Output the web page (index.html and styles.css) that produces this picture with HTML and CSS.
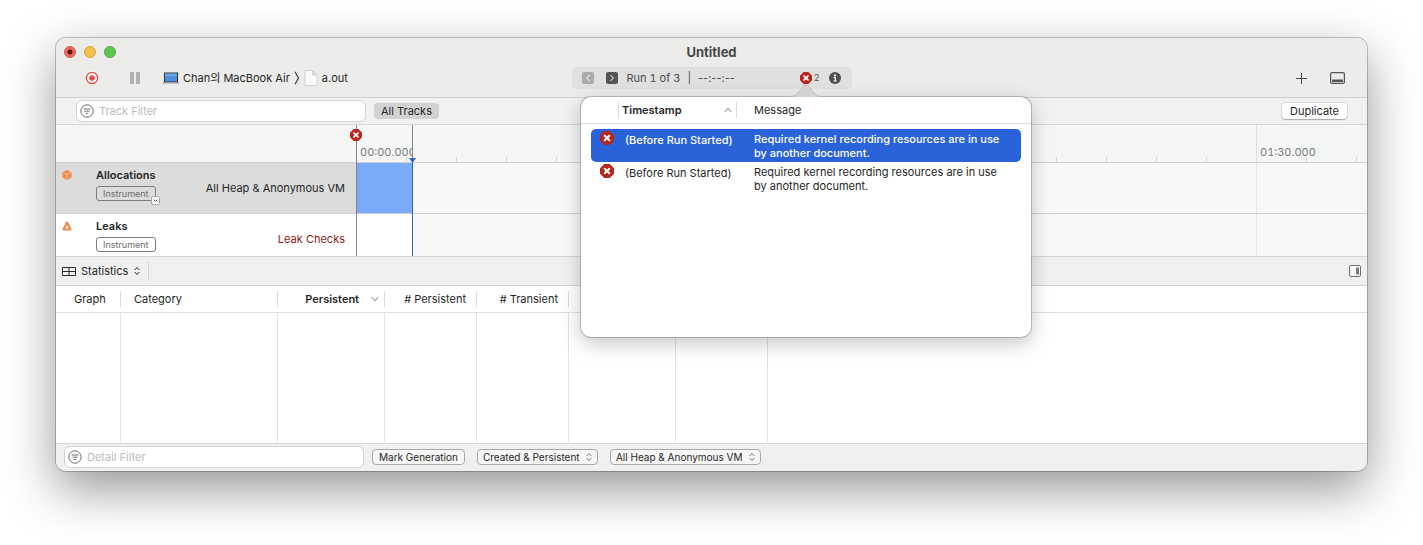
FILE: index.html
```html
<!DOCTYPE html>
<html lang="en">
<head>
    <meta charset="UTF-8">
    <meta name="viewport" content="width=device-width, initial-scale=1.0">
    <title>Untitled</title>
    <link rel="stylesheet" href="styles.css">
</head>
<body>

    <!-- shared icons -->
    <svg class="defs" width="0" height="0" aria-hidden="true">
        <symbol id="error" viewBox="0 0 14 14">
            <path d="M4.800 .5h4.400L13.500 4.800v4.400L9.200 13.500H4.800L.5 9.200V4.800z" fill="#b9261b" stroke="#b9261b" stroke-width="1.400" stroke-linejoin="round"/>
            <path d="M4.700 4.700l4.600 4.600M9.300 4.700L4.700 9.300" stroke="#fff" stroke-width="2" stroke-linecap="round"/>
        </symbol>
        <symbol id="filter" viewBox="0 0 14 14">
            <circle cx="7" cy="7" r="6.200" fill="none" stroke="#6e6e6e"/>
            <path d="M3.500 5h7M4.500 7.200h5M5.800 9.400h2.400" stroke="#6e6e6e" fill="none"/>
        </symbol>
        <symbol id="updown" viewBox="0 0 6 10">
            <path d="M1 3.700L3 1.500l2 2.200M1 6.300l2 2.200 2-2.200" fill="none" stroke="currentColor" stroke-linecap="round" stroke-linejoin="round"/>
        </symbol>
    </svg>

    <div class="window">
        <header class="titlebar">
            <div class="title-row">
                <div class="lights">
                    <button class="light red" aria-label="Close"></button>
                    <button class="light yellow" aria-label="Minimize"></button>
                    <button class="light green" aria-label="Zoom"></button>
                </div>
                <h1>Untitled</h1>
            </div>
            <div class="toolbar">
                <div class="tools">
                    <button class="record" aria-label="Record">
                        <svg width="14" height="14" viewBox="0 0 14 14"><circle cx="7" cy="7" r="7" fill="#fff"/><circle cx="7" cy="7" r="5.700" fill="none" stroke="#ee4b3e" stroke-width="1.300"/><circle cx="7" cy="7" r="2.800" fill="#ee4b3e"/></svg>
                    </button>
                    <button class="pause" aria-label="Pause">
                        <svg width="10" height="12" viewBox="0 0 10 12"><path d="M0 0h4v12H0zM6 0h4v12H6z" fill="#b1b1b0"/></svg>
                    </button>
                    <button class="target">
                        <svg width="16" height="12" viewBox="0 0 16 12"><path d="M1 .5h14V10H1z" fill="#333"/><path d="M2 1.500h12V9.500H2z" fill="#4a8fdb"/><path d="M2 1.500h12v3H2z" fill="#69a5e4"/><path d="M0 10h16v1.500H0z" fill="#9a9a9a"/></svg>
                        <span>Chan의 MacBook Air</span>
                        <svg width="6" height="14" viewBox="0 0 6 14"><path d="M1 .7L4.500 7 1 13.300" fill="none" stroke="#3a3a3a" stroke-width="1.200"/></svg>
                        <svg class="doc" width="14" height="16" viewBox="0 0 14 16"><path d="M1 .5h7.500L13 5v10.500H1z" fill="#fbfbfb" stroke="#d2d2d2"/><path d="M8.500 .5V5H13z" fill="#e4e4e4" stroke="#cfcfcf"/></svg>
                        <span>a.out</span>
                    </button>
                </div>
                <div class="status">
                    <button class="step prev" aria-label="Previous run" disabled>
                        <svg width="12" height="12" viewBox="0 0 12 12"><path d="M7.300 3.300L4.600 6l2.700 2.700" fill="none" stroke="#fff" stroke-linecap="round"/></svg>
                    </button>
                    <button class="step" aria-label="Next run">
                        <svg width="12" height="12" viewBox="0 0 12 12"><path d="M4.700 3.300L7.400 6 4.700 8.700" fill="none" stroke="#fff" stroke-linecap="round"/></svg>
                    </button>
                    <div class="run"><span class="number">Run 1 of 3</span><span>|</span><span>--:--:--</span></div>
                    <div class="errors">
                        <button class="plain" aria-label="Show errors"><svg width="12" height="12"><use href="#error"/></svg></button>
                        <div class="popover">
                            <svg class="arrow" width="32" height="13" viewBox="0 0 32 13"><path d="M0 13c5 0 6-1.500 8.500-4.200L14.500 1.500q1.500-1.500 3 0l6 7.300C26 11.500 27 13 32 13z" fill="#d3d3d2"/><path d="M0 12.500c5 0 6-1.500 8.500-4.200L14.500 1.300q1.500-1.500 3 0l6 7C26 11 27 12.500 32 12.500" fill="none" stroke="#bcbcbb"/></svg>
                            <table class="messages">
                                <colgroup><col class="c-icon"><col class="c-time"><col></colgroup>
                                <thead>
                                    <tr>
                                        <th></th>
                                        <th class="sorted"><span>Timestamp<svg width="8" height="6" viewBox="0 0 8 6"><path d="M.8 4.800L4 1.200l3.200 3.600" fill="none" stroke="#777"/></svg></span></th>
                                        <th>Message</th>
                                    </tr>
                                </thead>
                                <tbody>
                                    <tr class="selected">
                                        <td><svg width="14" height="14"><use href="#error"/></svg></td>
                                        <td>(Before Run Started)</td>
                                        <td>Required kernel recording resources are in use by another document.</td>
                                    </tr>
                                    <tr>
                                        <td><svg width="14" height="14"><use href="#error"/></svg></td>
                                        <td>(Before Run Started)</td>
                                        <td>Required kernel recording resources are in use by another document.</td>
                                    </tr>
                                </tbody>
                            </table>
                        </div>
                    </div>
                    <span class="count">2</span>
                    <button class="plain info" aria-label="Info">
                        <svg width="12" height="12" viewBox="0 0 12 12"><circle cx="6" cy="6" r="6" fill="#4f4f4f"/><circle cx="6" cy="3.200" r="1" fill="#fff"/><path d="M4.600 5.300h1.700v3.500M4.500 9h3.200" fill="none" stroke="#fff" stroke-width="1.200"/></svg>
                    </button>
                </div>
                <div class="tools right">
                    <button class="plain" aria-label="Add"><svg width="11" height="11" viewBox="0 0 11 11"><path d="M5.500 0v11M0 5.500h11" stroke="#4a4a4a"/></svg></button>
                    <button class="plain" aria-label="Toggle detail area"><svg width="15" height="12" viewBox="0 0 15 12"><rect x=".6" y=".6" width="13.800" height="10.800" rx="1.500" fill="none" stroke="#555" stroke-width="1.200"/><path d="M2 7.500h11v2.500H2z" fill="#555"/></svg></button>
                </div>
            </div>
        </header>

        <div class="filterbar">
            <label class="search">
                <svg width="14" height="14"><use href="#filter"/></svg>
                <input type="text" placeholder="Track Filter" aria-label="Track Filter">
            </label>
            <button class="scope">All Tracks</button>
            <button class="duplicate">Duplicate</button>
        </div>

        <div class="tracks">
            <div class="ruler">
                <div class="corner"></div>
                <div class="scale">
                    <div class="mark first"><span>00:00.000</span></div>
                    <div class="mark"></div>
                    <div class="mark"></div>
                    <div class="mark last"><span>01:30.000</span></div>
                </div>
            </div>
            <div class="track active">
                <div class="info-cell">
                    <svg class="kind" width="10" height="10" viewBox="0 0 10 10"><path d="M5 0l4.600 2.200v5.300L5 10 .4 7.500V2.200z" fill="#ef8a4c"/><path d="M.6 2.400L5 4.600l4.400-2.200M5 4.600V10" fill="none" stroke="#f9c9a6" stroke-width=".8"/></svg>
                    <div class="name">
                        <h2>Allocations</h2>
                        <button class="tag">Instrument<svg class="more" width="9" height="9" viewBox="0 0 9 9"><rect x=".5" y=".5" width="8" height="8" rx="1.500" fill="#fff" stroke="#aaa"/><path d="M2.700 3.700l1.800 1.800 1.800-1.800" fill="none" stroke="#444"/></svg></button>
                    </div>
                    <span class="lane-label">All Heap &amp; Anonymous VM</span>
                </div>
                <div class="lane"><div class="region"></div></div>
            </div>
            <div class="track">
                <div class="info-cell">
                    <svg class="kind" width="10" height="10" viewBox="0 0 10 10"><path d="M5 1.500L8.500 8.500h-7z" fill="none" stroke="#ef8a4c" stroke-width="2.200" stroke-linejoin="round"/></svg>
                    <div class="name">
                        <h2>Leaks</h2>
                        <button class="tag">Instrument</button>
                    </div>
                    <span class="lane-label leak">Leak Checks</span>
                </div>
                <div class="lane"><div class="region"></div></div>
            </div>
            <div class="start-line"><svg width="12" height="12"><use href="#error"/></svg></div>
            <div class="playhead"><svg width="7" height="5" viewBox="0 0 7 5"><path d="M0 0h7L3.500 5z" fill="#2a62d9"/></svg></div>
        </div>

        <div class="detailbar">
            <label class="picker">
                <svg width="14" height="9" viewBox="0 0 14 9"><path d="M.5 .5h13v8H.5zM.5 4.500h13M7 .5v8" fill="none" stroke="#2b2b2b"/></svg>
                <select aria-label="Detail view"><option>Statistics</option></select>
                <svg width="6" height="10"><use href="#updown"/></svg>
            </label>
            <button class="plain side" aria-label="Toggle inspector"><svg width="12" height="12" viewBox="0 0 12 12"><rect x=".5" y=".5" width="11" height="11" rx="1.500" fill="#fafafa" stroke="#6f6f6f"/><path d="M7 2.500h3v7H7z" fill="#777"/></svg></button>
        </div>

        <table class="stats">
            <colgroup>
                <col class="w-graph"><col class="w-cat"><col class="w-wide"><col class="w-num"><col class="w-num"><col class="w-wide"><col class="w-num"><col>
            </colgroup>
            <thead>
                <tr>
                    <th>Graph</th>
                    <th class="cat">Category</th>
                    <th class="sorted"><span>Persistent<svg width="8" height="6" viewBox="0 0 8 6"><path d="M.8 1.200L4 4.800l3.200-3.600" fill="none" stroke="#777"/></svg></span></th>
                    <th class="num"># Persistent</th>
                    <th class="num"># Transient</th>
                    <th></th>
                    <th></th>
                    <th></th>
                </tr>
            </thead>
            <tbody>
                <tr><td></td><td></td><td></td><td></td><td></td><td></td><td></td><td></td></tr>
            </tbody>
        </table>

        <footer class="bottombar">
            <label class="search">
                <svg width="14" height="14"><use href="#filter"/></svg>
                <input type="text" placeholder="Detail Filter" aria-label="Detail Filter">
            </label>
            <button class="pill">Mark Generation</button>
            <label class="pill">
                <select aria-label="Lifespan"><option>Created &amp; Persistent</option></select>
                <svg width="6" height="10"><use href="#updown"/></svg>
            </label>
            <label class="pill">
                <select aria-label="Allocation type"><option>All Heap &amp; Anonymous VM</option></select>
                <svg width="6" height="10"><use href="#updown"/></svg>
            </label>
        </footer>
    </div>

</body>
</html>
```
FILE: styles.css
```css
* {
    box-sizing: border-box;
}
body {
    margin: 0;
    padding: 38px 56px 74px;
    background: #fff;
    font-family: Inter, "Noto Sans CJK KR", sans-serif;
    font-size: 11px;
    line-height: 14px;
    color: #262626;
}
button, input, select {
    font: inherit;
    color: inherit;
    margin: 0;
    padding: 0;
    border: none;
    background: none;
}
select {
    appearance: none;
}
svg {
    display: block;
    flex: none;
    overflow: visible;
}
h1, h2 {
    margin: 0;
}
.defs {
    position: absolute;
}
.window {
    border-radius: 10px;
    background: #fff;
    box-shadow: 0 0 0 1px rgba(0, 0, 0, 0.22), 0 18px 50px rgba(0, 0, 0, 0.42);
}

/* title bar */
.titlebar {
    background: #ececea;
    border-bottom: 1px solid #cfcfce;
    border-radius: 10px 10px 0 0;
    padding-bottom: 7px;
}
.title-row, .toolbar {
    display: grid;
    grid-template-columns: 1fr 280px 1fr;
    align-items: center;
}
.title-row {
    height: 28px;
}
.title-row h1 {
    font-size: 13px;
    line-height: 16px;
    text-align: center;
    color: #474747;
}
.lights {
    display: flex;
    gap: 8px;
    padding-left: 8px;
}
.light {
    width: 12px;
    height: 12px;
    border-radius: 50%;
    border: 1px solid;
}
.red {
    background: radial-gradient(circle, #6b0f0a 2px, #ec6a5e 3px);
    border-color: #d35549;
}
.yellow {
    background: #f4bf4f;
    border-color: #dba63b;
}
.green {
    background: #61c554;
    border-color: #50aa43;
}
.toolbar {
    height: 24px;
}
.tools {
    display: flex;
    align-items: center;
    padding-left: 29px;
}
.tools.right {
    justify-content: flex-end;
    gap: 23px;
    padding: 0 22px 0 0;
}
.pause {
    margin-left: 31px;
}
.target {
    display: flex;
    align-items: center;
    gap: 4px;
    margin-left: 23px;
    white-space: nowrap;
}
.status {
    display: flex;
    align-items: center;
    height: 22px;
    padding: 0 11px 0 10px;
    border-radius: 5px;
    background: #e0e0de;
    color: #4d4d4d;
}
.step {
    margin-right: 12px;
    border-radius: 2px;
    background: #555;
}
.step + .step {
    margin-right: 9px;
}
.prev {
    background: #ababaa;
}
.run {
    display: flex;
    gap: 7px;
}
.number, .mark {
    font-variant-numeric: tabular-nums;
}
.errors {
    position: relative;
    margin-left: auto;
}
.plain {
    display: block;
}
.count {
    margin-left: 2px;
    font-size: 9px;
}
.info {
    margin-left: 9px;
}

/* error popover */
.popover {
    position: absolute;
    z-index: 2;
    top: 25px;
    left: 50%;
    width: 450px;
    min-height: 240px;
    margin-left: -225px;
    border-radius: 10px;
    background: #fff;
    color: #262626;
    box-shadow: 0 0 0 1px rgba(0, 0, 0, 0.2), 0 6px 20px rgba(0, 0, 0, 0.24);
}
.arrow {
    position: absolute;
    left: 209px;
    top: -13px;
}
.messages, .stats {
    width: 100%;
    table-layout: fixed;
    border-spacing: 0;
}
th, td {
    padding: 0;
    text-align: left;
    font-weight: normal;
}
th {
    height: 27px;
    border-bottom: 1px solid #e0e0e0;
    background: linear-gradient(#dcdcdc, #dcdcdc) right center / 1px 16px no-repeat;
}
th:last-child {
    background: none;
}
.sorted {
    font-weight: 600;
}
.sorted span {
    display: flex;
    align-items: center;
}
.c-icon {
    width: 38px;
}
.c-time {
    width: 118px;
}
.messages .sorted span {
    justify-content: space-between;
    padding: 0 5px 0 3px;
}
.messages th:last-child {
    padding-left: 17px;
}
.messages tbody::before {
    content: "";
    display: block;
    height: 5px;
}
.messages td {
    height: 33px;
    padding: 4px 0 0;
    vertical-align: top;
}
.messages td:first-child {
    padding: 2px 0 0 9px;
    border-left: 10px solid transparent;
    background-clip: padding-box;
    border-radius: 15px 0 0 15px / 5px 0 0 5px;
}
.messages td:nth-child(2) {
    padding-left: 6px;
}
.messages td:last-child {
    padding: 3px 20px 0 17px;
    border-right: 10px solid transparent;
    background-clip: padding-box;
    border-radius: 0 15px 15px 0 / 0 5px 5px 0;
}
.messages .selected td {
    background-color: #2a62d9;
    color: #fff;
    font-weight: 500;
}

/* filter bar */
.filterbar {
    display: flex;
    align-items: center;
    height: 27px;
    padding: 0 20px;
    background: #f1f1f1;
    border-bottom: 1px solid #d6d6d6;
}
.search {
    display: flex;
    align-items: center;
    gap: 5px;
    height: 22px;
    padding: 0 3px;
    border: 1px solid #d2d2d2;
    border-radius: 6px;
    background: #fff;
}
.filterbar .search {
    width: 290px;
}
.search input {
    flex: 1;
    min-width: 0;
    outline: none;
}
.search input::placeholder {
    color: #bcbcbc;
}
.scope {
    height: 16px;
    margin-left: 8px;
    padding: 0 7px;
    border-radius: 4px;
    background: #d2d2d2;
}
.duplicate {
    height: 16px;
    margin-left: auto;
    padding: 0 8px;
    border-radius: 4px;
    background: #fff;
    box-shadow: 0 0 0 1px rgba(0, 0, 0, 0.1), 0 1px 1px rgba(0, 0, 0, 0.2);
}

/* timeline */
.tracks {
    position: relative;
    border-bottom: 1px solid #d4d4d4;
}
.ruler, .track {
    display: grid;
    grid-template-columns: 300px 1fr;
}
.ruler {
    height: 38px;
    background: #f4f6f5;
    border-bottom: 1px solid #d0d0d0;
}
.scale {
    display: flex;
    min-width: 0;
    overflow: hidden;
    background: repeating-linear-gradient(90deg, #d6d6d6 0 1px, transparent 1px 50px) bottom / 100% 5px no-repeat;
}
.mark {
    flex: 0 0 300px;
    padding: 20px 0 0 3px;
    border-left: 1px solid #dcdddc;
    color: #7b7b7b;
}
.mark.first span {
    display: block;
    width: 52px;
    overflow: hidden;
}
.mark.last {
    flex: 1;
}
.track {
    height: 42px;
    background: #fff;
}
.track.active {
    height: 51px;
    background: #dcdcdc;
    border-bottom: 1px solid #d0d0d0;
}
.info-cell {
    display: flex;
    padding: 5px 11px 0 6px;
}
.kind {
    margin: 2px 24px 0 0;
}
.name {
    flex: 1;
}
.name h2 {
    font-size: 11px;
    line-height: 14px;
    font-weight: 600;
}
.tag {
    position: relative;
    height: 15px;
    margin-top: 4px;
    padding: 0 6px;
    display: block;
    border: 1px solid #7d7d7d;
    border-radius: 3px;
    font-size: 9px;
    line-height: 13px;
    color: #6e6e6e;
}
.more {
    position: absolute;
    right: -5px;
    bottom: -5px;
}
.lane-label {
    margin-top: 13px;
}
.leak {
    color: #8f1a14;
}
.lane {
    background: linear-gradient(#e4e6e5, #e4e6e5) 900px 0 / 1px 100% no-repeat #f7f9f8;
}
.region {
    width: 57px;
    height: 100%;
    background: #fff;
}
.active .region {
    background: #79abf9;
}
.start-line, .playhead {
    position: absolute;
    top: 0;
    bottom: 0;
    width: 1px;
}
.start-line {
    left: 300px;
    background: #86868a;
}
.start-line svg {
    margin: 4px 0 0 -6px;
}
.playhead {
    left: 356px;
    background: linear-gradient(#86868a 34px, #2a62d9 34px);
}
.playhead svg {
    margin: 33px 0 0 -3px;
}

/* detail area */
.detailbar {
    display: flex;
    align-items: center;
    justify-content: space-between;
    height: 29px;
    padding: 0 6px;
    background: #f0f0f0;
    border-bottom: 1px solid #d4d4d4;
}
.picker {
    display: flex;
    align-items: center;
    gap: 5px;
    height: 20px;
    padding-right: 8px;
    border-right: 1px solid #d6d6d6;
}
.w-graph {
    width: 65px;
}
.w-cat {
    width: 157px;
}
.w-wide {
    width: 107px;
}
.w-num {
    width: 92px;
}
.stats th:first-child {
    padding-left: 18px;
}
.stats .cat {
    padding-left: 13px;
}
.stats .num {
    padding-right: 11px;
    text-align: right;
}
.stats .sorted span {
    justify-content: flex-end;
    gap: 12px;
    padding-right: 6px;
}
.stats td {
    height: 130px;
    border-right: 1px solid #e2e2e2;
}
.stats td:last-child {
    border-right: none;
}

/* bottom bar */
.bottombar {
    display: flex;
    align-items: center;
    gap: 12px;
    height: 28px;
    padding: 0 8px 1px;
    background: #f0f0f0;
    border-top: 1px solid #d6d6d6;
    border-radius: 0 0 10px 10px;
}
.bottombar .search {
    width: 300px;
    margin-right: -4px;
}
.pill {
    display: flex;
    align-items: center;
    gap: 6px;
    height: 16px;
    padding: 0 5px;
    border: 1px solid #a9a9a9;
    border-radius: 4px;
    background: #f6f6f6;
    font-size: 10px;
    line-height: 14px;
}
button.pill {
    padding: 0 6px;
}
.pill svg {
    color: #777;
}
```
